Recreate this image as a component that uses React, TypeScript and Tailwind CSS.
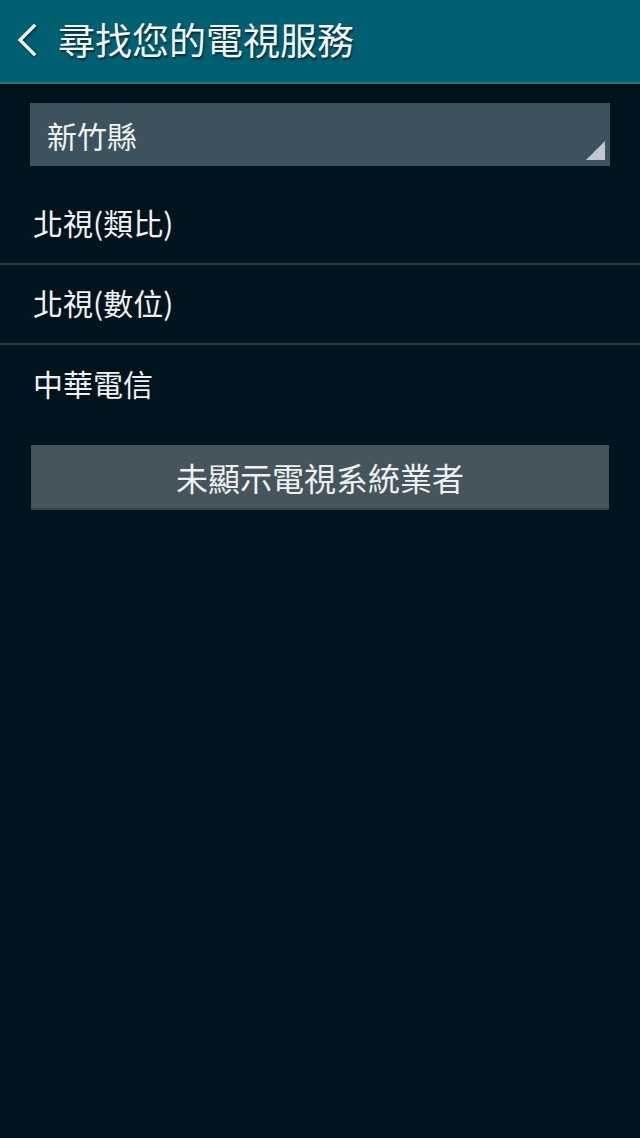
import React from 'react';

const PROVIDERS = ['北視(類比)', '北視(數位)', '中華電信'];

const FONT = { fontFamily: '"Noto Sans CJK TC", sans-serif' };

export default function App() {
  return (
    <div className="w-[640px] h-[1138px] bg-[#00141d] flex flex-col" style={FONT}>
      {/* header */}
      <div className="h-[84px] bg-[#005f70] border-b-2 border-[#1c7a8a] flex items-center pl-[15px] pb-[3px] shrink-0 shadow-[0_3px_4px_rgba(0,0,0,0.5)]">
        <svg width="24" height="32" viewBox="0 0 24 32" className="drop-shadow-[1px_1px_1px_rgba(0,0,0,0.6)]">
          <path d="M19 2 L5 16 L19 30" stroke="#f2f5f6" strokeWidth="3.4" fill="none" strokeLinecap="square" />
        </svg>
        <h1 className="ml-[19px] text-[37px] leading-none text-[#f4f6f7] [text-shadow:1px_2px_2px_rgba(0,0,0,0.55)]">
          尋找您的電視服務
        </h1>
      </div>

      {/* region select */}
      <div className="px-[30px] pt-[19px]">
        <div className="relative h-[63px] bg-[#3d525c] flex items-center pl-[17px]">
          <span className="text-[30px] leading-none text-[#f0f2f3]">新竹縣</span>
          <svg width="19" height="19" viewBox="0 0 19 19" className="absolute right-[5px] bottom-[6px]">
            <polygon points="19,0 19,19 0,19" fill="#c1c8ce" />
          </svg>
        </div>
      </div>

      {/* providers */}
      <div className="flex flex-col mt-[19px]">
        {PROVIDERS.map((name, i) => (
          <div
            key={name}
            className={`h-[80px] flex items-center pl-[33px] pb-[4px] ${i < PROVIDERS.length - 1 ? 'border-b-2 border-[#2a3a42]' : ''}`}
          >
            <span className="text-[30px] leading-none text-[#f0f2f3]">{name}</span>
          </div>
        ))}
      </div>

      <div className="px-[31px] mt-[20px]">
        <button className="w-full h-[65px] bg-[#46555c] border-b-2 border-[#37454b] text-[32px] leading-none text-[#eef1f2] flex items-center justify-center">
          未顯示電視系統業者
        </button>
      </div>
    </div>
  );
}
